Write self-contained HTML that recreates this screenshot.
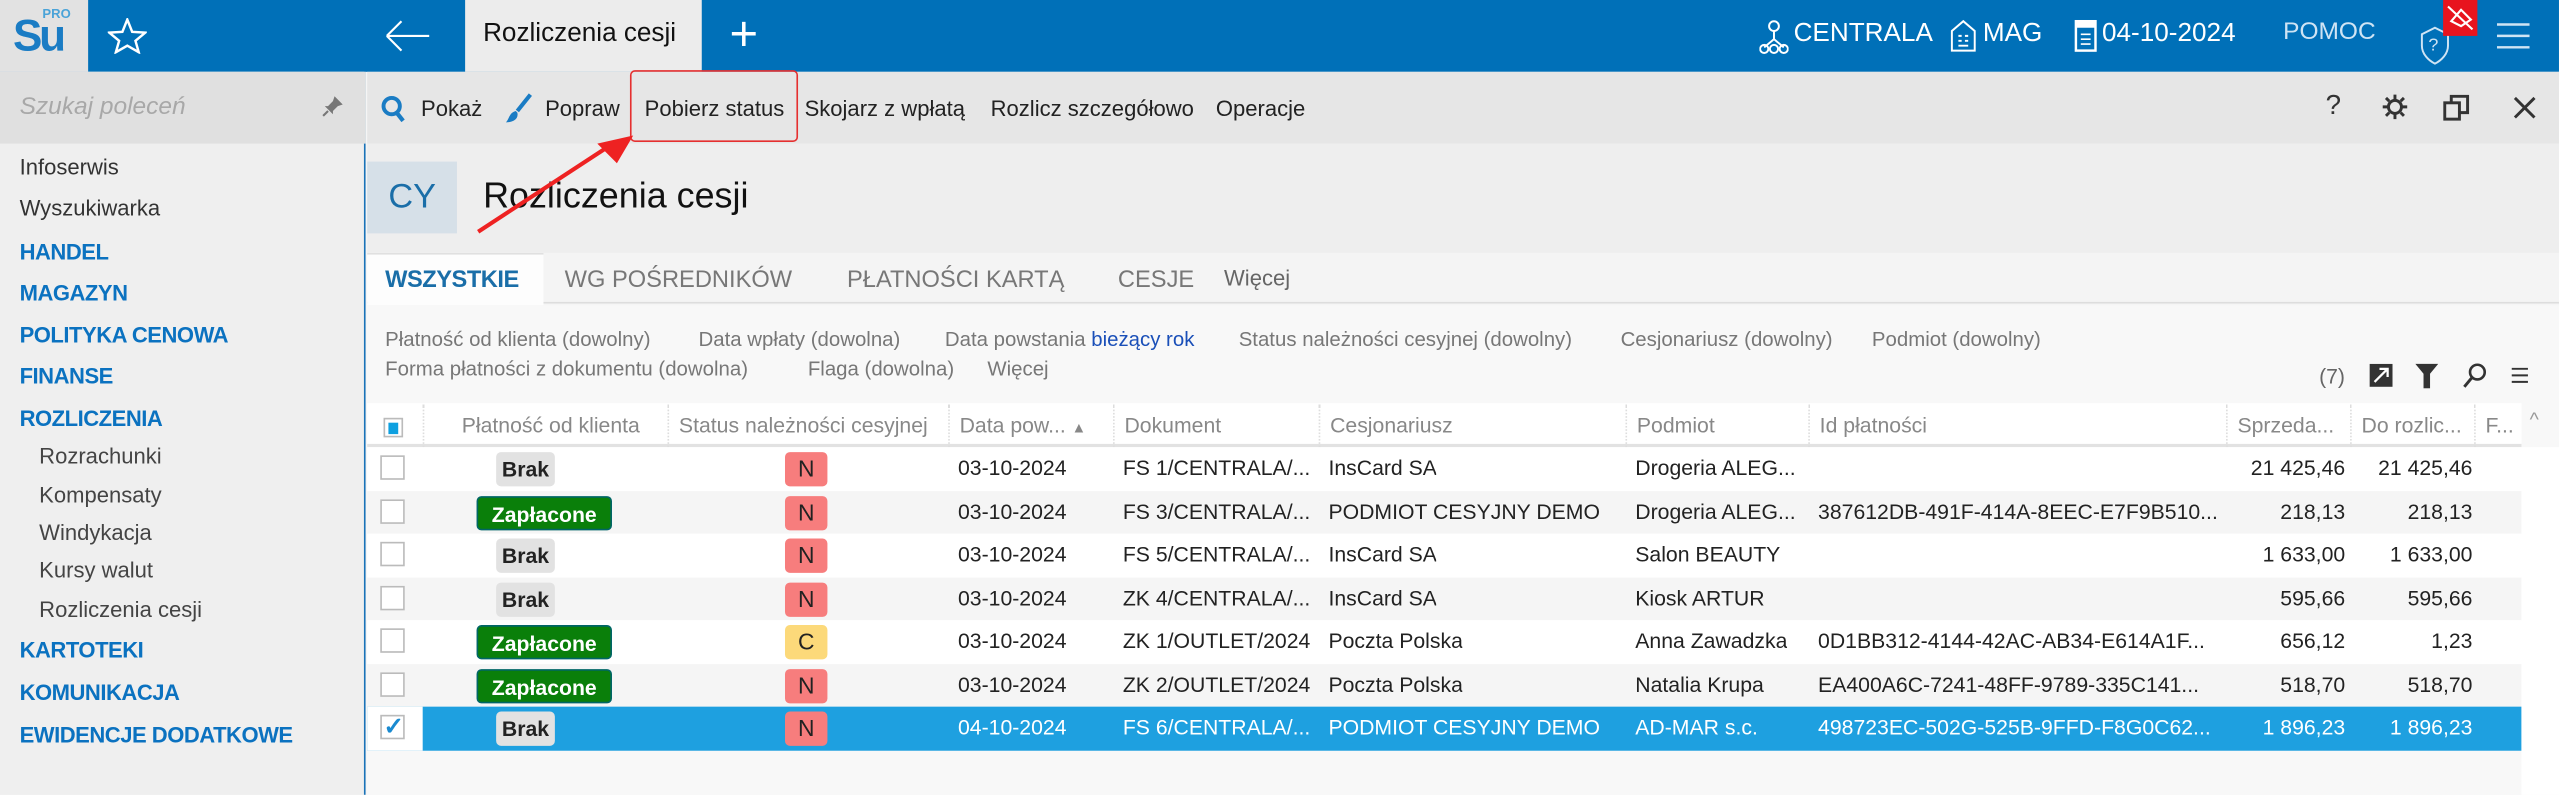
<!DOCTYPE html>
<html><head><meta charset="utf-8"><style>
*{box-sizing:border-box;margin:0;padding:0}
html,body{width:2559px;height:794px;overflow:hidden;background:#f5f5f5}
#s{position:absolute;left:0;top:0;width:1568px;height:487px;transform:scale(1.632);transform-origin:0 0;font-family:"Liberation Sans",sans-serif;font-size:13px;color:#222;background:#f5f5f5}
.a{position:absolute;white-space:nowrap}
.top{left:0;top:0;width:1568px;height:44px;background:#0070b8}
.w{color:#fff}
.side{left:0;top:44px;width:224px;height:443px;background:#efefef;border-right:1px solid #1a73b8}
.nav{left:12px;font-size:13.5px;color:#333}
.navb{left:12px;font-size:13.5px;color:#0b72c0;font-weight:bold;letter-spacing:-0.3px}
.sub{left:24px;font-size:13.5px;color:#444}
.tb{font-size:13.5px;color:#222}
.row{position:absolute;left:225px;width:1320px;height:26.5px}
.c{position:absolute;top:0;height:26.5px;line-height:26.5px;white-space:nowrap;overflow:hidden;font-size:13px}
.cb{position:absolute;left:8px;top:5px;width:15px;height:15px;border:1px solid #bbb;background:#fff}
.pill{position:absolute;top:3px;height:21px;line-height:21px;border-radius:3px;text-align:center;font-size:13px;font-weight:bold}
.brak{background:#e2e2e2;color:#222;left:0;width:58px}
.zap{background:#0a7f0a;color:#fff;border:1px solid #066}
.N{background:#f77d7d;color:#222;width:26px;left:256px;font-weight:normal;font-size:14px}
.hd{position:absolute;top:0;height:26px;line-height:26px;color:#888;font-size:13px;border-left:1px dotted #ddd;padding-left:6px;white-space:nowrap;overflow:hidden}
.r{text-align:right}
</style></head><body><div id="s">
<div class="a top"></div>
<div class="a" style="left:0;top:0;width:54px;height:44px;background:#e2e2e2"></div>
<div class="a" style="left:8px;top:7px;font-size:27px;font-weight:bold;color:#1a7cc4;letter-spacing:-2px">Su</div>
<div class="a" style="left:26px;top:4px;font-size:8px;font-weight:bold;color:#4aa3d8">PRO</div>
<svg class="a" style="left:66px;top:11px" width="24" height="22" viewBox="0 0 24 22"><polygon points="12,1 15,8.5 23,9 17,14 19,21 12,17 5,21 7,14 1,9 9,8.5" fill="none" stroke="#fff" stroke-width="1.5"/></svg>
<svg class="a" style="left:236px;top:12px" width="28" height="20"><path d="M1 10H27M1 10L10 1M1 10L10 19" stroke="#fff" stroke-width="1.3" fill="none"/></svg>
<div class="a" style="left:285px;top:0;width:145px;height:44px;background:#ececec"></div>
<div class="a" style="left:296px;top:12px;font-size:16px;color:#111">Rozliczenia cesji</div>
<div class="a w" style="left:447px;top:5px;font-size:30px;font-weight:100">+</div>
<svg class="a" style="left:1078px;top:12px" width="18" height="22"><g fill="none" stroke="#fff" stroke-width="1.2"><circle cx="9" cy="4" r="3"/><path d="M9 7V12M3 17L9 12L15 17"/><circle cx="3" cy="18" r="2.5"/><circle cx="15" cy="18" r="2.5"/><circle cx="9" cy="18" r="2.5"/></g></svg>
<div class="a w" style="left:1099px;top:12px;font-size:16px">CENTRALA</div>
<svg class="a" style="left:1195px;top:12px" width="16" height="20"><path d="M1 19V7L8 1L15 7V19ZM5 10h2M9 10h2M5 13h2M9 13h2M5 16h6" stroke="#fff" fill="none" stroke-width="1.2"/></svg>
<div class="a w" style="left:1215px;top:12px;font-size:16px">MAG</div>
<svg class="a" style="left:1271px;top:12px" width="14" height="20"><rect x="1" y="1" width="12" height="18" fill="none" stroke="#fff" stroke-width="1.5"/><rect x="1" y="1" width="12" height="4" fill="#fff"/><path d="M4 9h6M4 12h6M4 15h6" stroke="#fff"/></svg>
<div class="a w" style="left:1288px;top:12px;font-size:16px">04-10-2024</div>
<div class="a" style="left:1399px;top:11px;font-size:15px;color:#cfe4f4">POMOC</div>
<svg class="a" style="left:1483px;top:16px" width="18" height="24"><path d="M9 1L17 5V12C17 17 13 21 9 23C5 21 1 17 1 12V5Z" fill="none" stroke="#cfe4f4" stroke-width="1.2"/><text x="5" y="15" font-size="11" fill="#cfe4f4" font-family="Liberation Sans">?</text></svg>
<div class="a" style="left:1497px;top:0;width:21px;height:22px;background:#e8141e"></div>
<svg class="a" style="left:1499px;top:3px" width="17" height="16"><path d="M3 10L9 3L15 9L9 13ZM1 1L16 15" stroke="#fff" fill="none" stroke-width="1.3"/></svg>
<svg class="a" style="left:1530px;top:14px" width="20" height="16"><path d="M0 1H20M0 8H20M0 15H20" stroke="#cfe4f4" stroke-width="1.5"/></svg>

<div class="a side"></div>
<div class="a" style="left:0;top:44px;width:224px;height:44px;background:#e0e0e0"></div>
<div class="a" style="left:12px;top:57px;font-size:15px;font-style:italic;color:#a8a8a8">Szukaj poleceń</div>
<svg class="a" style="left:197px;top:58px" width="14" height="14"><path d="M8 1L13 6L10 7L7 10L7 12L2 7L4 7L7 4Z" fill="#777"/><path d="M4 10L1 13" stroke="#777" stroke-width="1.3"/></svg>
<div class="a nav" style="top:95px">Infoserwis</div>
<div class="a nav" style="top:120px">Wyszukiwarka</div>
<div class="a navb" style="top:147px">HANDEL</div>
<div class="a navb" style="top:172px">MAGAZYN</div>
<div class="a navb" style="top:198px">POLITYKA CENOWA</div>
<div class="a navb" style="top:223px">FINANSE</div>
<div class="a navb" style="top:249px">ROZLICZENIA</div>
<div class="a sub" style="top:272px">Rozrachunki</div>
<div class="a sub" style="top:296px">Kompensaty</div>
<div class="a sub" style="top:319px">Windykacja</div>
<div class="a sub" style="top:342px">Kursy walut</div>
<div class="a sub" style="top:366px">Rozliczenia cesji</div>
<div class="a navb" style="top:391px">KARTOTEKI</div>
<div class="a navb" style="top:417px">KOMUNIKACJA</div>
<div class="a navb" style="top:443px">EWIDENCJE DODATKOWE</div>

<div class="a" style="left:225px;top:44px;width:1343px;height:44px;background:#e6e6e6"></div>
<svg class="a" style="left:233px;top:58px" width="16" height="18"><circle cx="7" cy="7" r="5" fill="none" stroke="#1a7cc4" stroke-width="2.4"/><path d="M10 11L14 16" stroke="#1a7cc4" stroke-width="2.6"/></svg>
<div class="a tb" style="left:258px;top:59px">Pokaż</div>
<svg class="a" style="left:309px;top:57px" width="18" height="19"><path d="M16 1L8 11" stroke="#1a7cc4" stroke-width="2.5"/><path d="M7 11C3 12 3 16 1 18C5 18 9 16 8 12Z" fill="#1a7cc4"/></svg>
<div class="a tb" style="left:334px;top:59px">Popraw</div>
<div class="a tb" style="left:395px;top:59px">Pobierz status</div>
<div class="a" style="left:386px;top:43px;width:103px;height:44px;border:1.5px solid #e53030;border-radius:3px"></div>
<div class="a tb" style="left:493px;top:59px">Skojarz z wpłatą</div>
<div class="a tb" style="left:607px;top:59px">Rozlicz szczegółowo</div>
<div class="a tb" style="left:745px;top:59px">Operacje</div>
<div class="a" style="left:1425px;top:55px;font-size:17px;color:#333">?</div>
<svg class="a" style="left:1459px;top:57px" width="17" height="17"><g fill="none" stroke="#333" stroke-width="1.8"><circle cx="8.5" cy="8.5" r="4"/><path d="M8.5 1V4M8.5 13V16M1 8.5H4M13 8.5H16M3 3L5 5M12 12L14 14M14 3L12 5M3 14L5 12"/></g></svg>
<svg class="a" style="left:1497px;top:58px" width="17" height="17"><g fill="none" stroke="#333" stroke-width="1.8"><rect x="1" y="5" width="9" height="10"/><path d="M5 5V1H15V11H10"/></g></svg>
<svg class="a" style="left:1540px;top:59px" width="14" height="14"><path d="M1 1L13 13M13 1L1 13" stroke="#333" stroke-width="1.8"/></svg>

<div class="a" style="left:225px;top:88px;width:1343px;height:67px;background:#eeeeee"></div>
<div class="a" style="left:225px;top:99px;width:55px;height:44px;background:#d6e0e8"></div>
<div class="a" style="left:238px;top:109px;font-size:21px;color:#1a6ea8">CY</div>
<div class="a" style="left:296px;top:107px;font-size:22px;color:#111">Rozliczenia cesji</div>

<div class="a" style="left:225px;top:155px;width:1343px;height:31px;background:#f4f4f4;border-bottom:1px solid #ddd"></div>
<div class="a" style="left:225px;top:155px;width:108px;height:32px;background:#fdfdfd;border-top:1px solid #e0e0e0"></div>
<div class="a" style="left:236px;top:164px;font-size:14.5px;font-weight:bold;color:#1a6ea8;letter-spacing:-0.3px">WSZYSTKIE</div>
<div class="a" style="left:346px;top:164px;font-size:14.5px;color:#777">WG POŚREDNIKÓW</div>
<div class="a" style="left:519px;top:164px;font-size:14.5px;color:#777">PŁATNOŚCI KARTĄ</div>
<div class="a" style="left:685px;top:164px;font-size:14.5px;color:#777">CESJE</div>
<div class="a" style="left:750px;top:163px;font-size:13.5px;color:#666">Więcej</div>

<div class="a" style="left:225px;top:187px;width:1343px;height:300px;background:#f8f8f8"></div>
<div class="a" style="left:236px;top:201px;font-size:12.5px;color:#777">Płatność od klienta (dowolny)</div>
<div class="a" style="left:428px;top:201px;font-size:12.5px;color:#777">Data wpłaty (dowolna)</div>
<div class="a" style="left:579px;top:201px;font-size:12.5px;color:#777">Data powstania <span style="color:#1a4fb8">bieżący rok</span></div>
<div class="a" style="left:759px;top:201px;font-size:12.5px;color:#777">Status należności cesyjnej (dowolny)</div>
<div class="a" style="left:993px;top:201px;font-size:12.5px;color:#777">Cesjonariusz (dowolny)</div>
<div class="a" style="left:1147px;top:201px;font-size:12.5px;color:#777">Podmiot (dowolny)</div>
<div class="a" style="left:236px;top:219px;font-size:12.5px;color:#777">Forma płatności z dokumentu (dowolna)</div>
<div class="a" style="left:495px;top:219px;font-size:12.5px;color:#777">Flaga (dowolna)</div>
<div class="a" style="left:605px;top:219px;font-size:12.5px;color:#777">Więcej</div>
<div class="a" style="left:1421px;top:223px;font-size:13px;color:#666">(7)</div>
<svg class="a" style="left:1451px;top:222px" width="16" height="16"><rect x="1" y="1" width="14" height="14" fill="#333"/><path d="M4 12L12 4M7 4H12V9" stroke="#fff" stroke-width="1.4" fill="none"/></svg>
<svg class="a" style="left:1480px;top:222px" width="14" height="16"><path d="M0 1H14L9 7V16H5V7Z" fill="#333"/></svg>
<svg class="a" style="left:1508px;top:222px" width="16" height="16"><circle cx="10" cy="6" r="4.5" fill="none" stroke="#333" stroke-width="1.6"/><path d="M7 9L2 15" stroke="#333" stroke-width="1.8"/></svg>
<svg class="a" style="left:1539px;top:225px" width="10" height="10"><path d="M0 1H10M0 5H10M0 9H10" stroke="#333" stroke-width="1.2"/></svg>

<div class="a" style="left:225px;top:247px;width:1320px;height:27px;background:#fff;border-bottom:2px solid #e2e2e2"></div>
<div class="a" style="left:235px;top:256px;width:12px;height:12px;border:1px solid #bbb;background:#fff"></div>
<div class="a" style="left:238px;top:259px;width:6px;height:7px;background:#0ea0e0"></div>
<div class="hd" style="left:259px;top:248px;width:150px;text-align:center">Płatność od klienta</div>
<div class="hd" style="left:409px;top:248px;width:172px">Status należności cesyjnej</div>
<div class="hd" style="left:581px;top:248px;width:101px">Data pow... <span style="font-size:9px">▲</span></div>
<div class="hd" style="left:682px;top:248px;width:126px">Dokument</div>
<div class="hd" style="left:808px;top:248px;width:188px">Cesjonariusz</div>
<div class="hd" style="left:996px;top:248px;width:112px">Podmiot</div>
<div class="hd" style="left:1108px;top:248px;width:256px">Id płatności</div>
<div class="hd" style="left:1364px;top:248px;width:76px">Sprzeda...</div>
<div class="hd" style="left:1440px;top:248px;width:76px">Do rozlic...</div>
<div class="hd" style="left:1516px;top:248px;width:29px">F...</div>
<div class="a" style="left:1550px;top:250px;font-size:12px;color:#999">^</div>

<div class="row" style="top:274px;background:#fff">
<div class="cb"></div><div class="pill brak" style="left:79px;width:36px">Brak</div><div class="pill N" style="left:256px">N</div>
<div class="c" style="left:362px">03-10-2024</div><div class="c" style="left:463px;width:120px">FS 1/CENTRALA/...</div><div class="c" style="left:589px">InsCard SA</div><div class="c" style="left:777px">Drogeria ALEG...</div><div class="c r" style="left:1139px;width:73px">21 425,46</div><div class="c r" style="left:1215px;width:75px">21 425,46</div></div>
<div class="row" style="top:300.5px;background:#f5f5f5">
<div class="cb"></div><div class="pill zap" style="left:67px;width:83px">Zapłacone</div><div class="pill N">N</div>
<div class="c" style="left:362px">03-10-2024</div><div class="c" style="left:463px;width:120px">FS 3/CENTRALA/...</div><div class="c" style="left:589px">PODMIOT CESYJNY DEMO</div><div class="c" style="left:777px">Drogeria ALEG...</div><div class="c" style="left:889px">387612DB-491F-414A-8EEC-E7F9B510...</div><div class="c r" style="left:1139px;width:73px">218,13</div><div class="c r" style="left:1215px;width:75px">218,13</div></div>
<div class="row" style="top:327px;background:#fff">
<div class="cb"></div><div class="pill brak" style="left:79px;width:36px">Brak</div><div class="pill N">N</div>
<div class="c" style="left:362px">03-10-2024</div><div class="c" style="left:463px;width:120px">FS 5/CENTRALA/...</div><div class="c" style="left:589px">InsCard SA</div><div class="c" style="left:777px">Salon BEAUTY</div><div class="c r" style="left:1139px;width:73px">1 633,00</div><div class="c r" style="left:1215px;width:75px">1 633,00</div></div>
<div class="row" style="top:353.5px;background:#f5f5f5">
<div class="cb"></div><div class="pill brak" style="left:79px;width:36px">Brak</div><div class="pill N">N</div>
<div class="c" style="left:362px">03-10-2024</div><div class="c" style="left:463px;width:120px">ZK 4/CENTRALA/...</div><div class="c" style="left:589px">InsCard SA</div><div class="c" style="left:777px">Kiosk ARTUR</div><div class="c r" style="left:1139px;width:73px">595,66</div><div class="c r" style="left:1215px;width:75px">595,66</div></div>
<div class="row" style="top:380px;background:#fff">
<div class="cb"></div><div class="pill zap" style="left:67px;width:83px">Zapłacone</div><div class="pill N" style="background:#fcd97a">C</div>
<div class="c" style="left:362px">03-10-2024</div><div class="c" style="left:463px;width:120px">ZK 1/OUTLET/2024</div><div class="c" style="left:589px">Poczta Polska</div><div class="c" style="left:777px">Anna Zawadzka</div><div class="c" style="left:889px">0D1BB312-4144-42AC-AB34-E614A1F...</div><div class="c r" style="left:1139px;width:73px">656,12</div><div class="c r" style="left:1215px;width:75px">1,23</div></div>
<div class="row" style="top:406.5px;background:#f5f5f5">
<div class="cb"></div><div class="pill zap" style="left:67px;width:83px">Zapłacone</div><div class="pill N">N</div>
<div class="c" style="left:362px">03-10-2024</div><div class="c" style="left:463px;width:120px">ZK 2/OUTLET/2024</div><div class="c" style="left:589px">Poczta Polska</div><div class="c" style="left:777px">Natalia Krupa</div><div class="c" style="left:889px">EA400A6C-7241-48FF-9789-335C141...</div><div class="c r" style="left:1139px;width:73px">518,70</div><div class="c r" style="left:1215px;width:75px">518,70</div></div>
<div class="row" style="top:433px;background:#1ea0e0;color:#fff">
<div style="position:absolute;left:0;top:0;width:34px;height:27px;background:#fff"></div>
<div class="cb"></div><div class="a" style="left:10px;top:3px;color:#1a8ad0;font-size:15px;font-weight:bold">✓</div>
<div class="pill brak" style="left:79px;width:36px">Brak</div><div class="pill N">N</div>
<div class="c" style="left:362px">04-10-2024</div><div class="c" style="left:463px;width:120px">FS 6/CENTRALA/...</div><div class="c" style="left:589px">PODMIOT CESYJNY DEMO</div><div class="c" style="left:777px">AD-MAR s.c.</div><div class="c" style="left:889px">498723EC-502G-525B-9FFD-F8G0C62...</div><div class="c r" style="left:1139px;width:73px">1 896,23</div><div class="c r" style="left:1215px;width:75px">1 896,23</div></div>
<div class="a" style="left:1545px;top:274px;width:23px;height:213px;background:#fff"></div>

<svg class="a" style="left:290px;top:82px" width="102" height="62"><path d="M3 60L84 7" stroke="#ee2222" stroke-width="2.5"/><polygon points="98,1 76,6 88,18" fill="#ee2222"/></svg>
</div></body></html>
